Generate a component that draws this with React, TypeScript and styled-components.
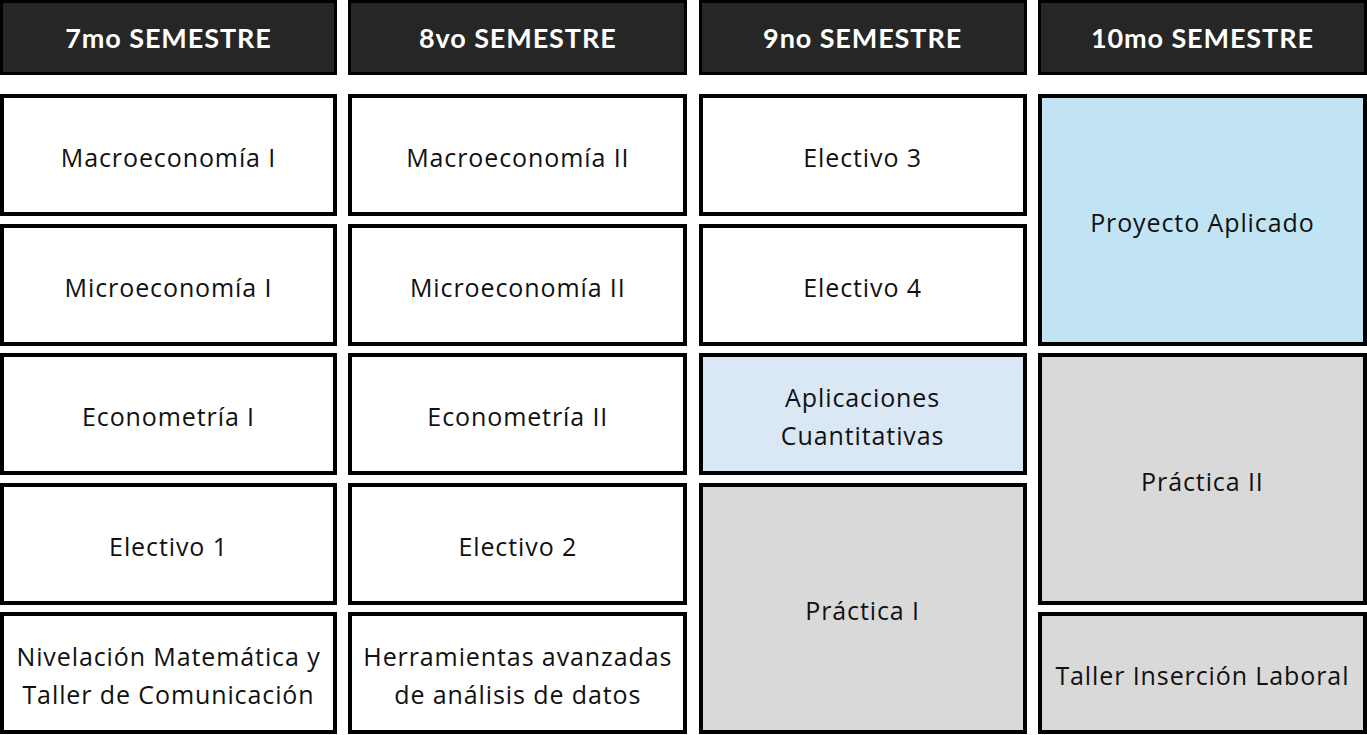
import React from "react";
import styled, { createGlobalStyle } from "styled-components";

type Tone = "white" | "blue" | "sky" | "gray";

interface ICourse {
  title: string;
  col: number;
  row: number;
  span?: number;
  tone?: Tone;
}

const semesters = ["7mo SEMESTRE", "8vo SEMESTRE", "9no SEMESTRE", "10mo SEMESTRE"];

const courses: ICourse[] = [
  { title: "Macroeconomía I", col: 1, row: 1 },
  { title: "Microeconomía I", col: 1, row: 2 },
  { title: "Econometría I", col: 1, row: 3 },
  { title: "Electivo 1", col: 1, row: 4 },
  { title: "Nivelación Matemática y\nTaller de Comunicación", col: 1, row: 5 },
  { title: "Macroeconomía II", col: 2, row: 1 },
  { title: "Microeconomía II", col: 2, row: 2 },
  { title: "Econometría II", col: 2, row: 3 },
  { title: "Electivo 2", col: 2, row: 4 },
  { title: "Herramientas avanzadas\nde análisis de datos", col: 2, row: 5 },
  { title: "Electivo 3", col: 3, row: 1 },
  { title: "Electivo 4", col: 3, row: 2 },
  { title: "Aplicaciones\nCuantitativas", col: 3, row: 3, tone: "sky" },
  { title: "Práctica I", col: 3, row: 4, span: 2, tone: "gray" },
  { title: "Proyecto Aplicado", col: 4, row: 1, span: 2, tone: "blue" },
  { title: "Práctica II", col: 4, row: 3, span: 2, tone: "gray" },
  { title: "Taller Inserción Laboral", col: 4, row: 5, tone: "gray" },
];

const toneColor: Record<Tone, string> = {
  white: "#ffffff",
  blue: "#c0e4f4",
  sky: "#dae8f6",
  gray: "#d9d9d9",
};

const App: React.FC = () => {
  return (
    <>
      <GlobalStyle />
      <STPage>
        <STHeaderRow>
          {semesters.map((s) => (
            <STHeader key={s}>{s}</STHeader>
          ))}
        </STHeaderRow>
        <STBody>
          {courses.map((c) => (
            <STCell
              key={c.title}
              $col={c.col}
              $row={c.row}
              $span={c.span ?? 1}
              $tone={c.tone ?? "white"}
            >
              {c.title}
            </STCell>
          ))}
        </STBody>
      </STPage>
    </>
  );
};

export default App;

const GlobalStyle = createGlobalStyle`
  html, body {
    margin: 0;
    padding: 0;
    background: #ffffff;
  }
  body {
    font-family: "Open Sans", "Noto Sans", sans-serif;
  }
`;

const columns = "337px 339px 328px 329px";

const STPage = styled.div`
  width: 1367px;
  height: 735px;
  overflow: hidden;
`;

const STHeaderRow = styled.div`
  display: grid;
  grid-template-columns: ${columns};
  column-gap: 11.3px;
  height: 75px;
`;

const STHeader = styled.div`
  box-sizing: border-box;
  display: flex;
  align-items: center;
  justify-content: center;
  background: #262626;
  border: 3px solid #000;
  color: #ffffff;
  font-family: "Lato", "Noto Sans", sans-serif;
  font-weight: 700;
  font-size: 27px;
  letter-spacing: 0.9px;
`;

const STBody = styled.div`
  display: grid;
  grid-template-columns: ${columns};
  grid-template-rows: repeat(5, 122px);
  column-gap: 11.3px;
  row-gap: 7.5px;
  margin-top: 19px;
`;

const STCell = styled.div<{ $col: number; $row: number; $span: number; $tone: Tone }>`
  box-sizing: border-box;
  grid-column: ${({ $col }) => $col};
  grid-row: ${({ $row, $span }) => `${$row} / span ${$span}`};
  display: flex;
  align-items: center;
  justify-content: center;
  text-align: center;
  white-space: pre-line;
  background: ${({ $tone }) => toneColor[$tone]};
  border: 4px solid #000;
  color: #111;
  font-size: 25px;
  line-height: 38px;
  letter-spacing: 0.9px;
  padding-top: 4px;
`;
